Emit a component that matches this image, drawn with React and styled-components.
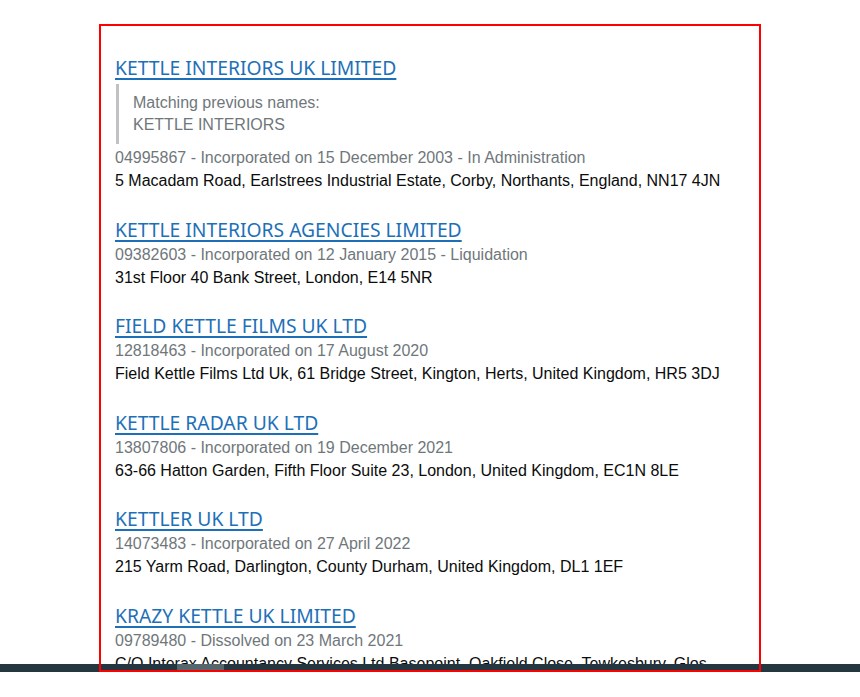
import React from "react";
import styled, { createGlobalStyle } from "styled-components";

const Global = createGlobalStyle`
  html, body { margin: 0; padding: 0; background: #fff; }
  body { font-family: "Liberation Sans", Arial, sans-serif; }
`;

const Page = styled.div`
  position: relative;
  width: 860px;
  height: 697px;
  background: #fff;
`;

const Viewport = styled.div`
  height: 664px;
  overflow: hidden;
`;

const Card = styled.div`
  margin: 24px 0 0 99px;
  width: 662px;
  box-sizing: border-box;
  padding: 31px 16px 0 16px;
`;

const Highlight = styled.div`
  position: absolute;
  top: 24px;
  left: 99px;
  width: 662px;
  height: 648px;
  box-sizing: border-box;
  border: 2px solid #ff0000;
  pointer-events: none;
`;

const ScrollTrack = styled.div`
  height: 8px;
  background: #243640;
  position: relative;
`;

const Thumb = styled.div`
  position: absolute;
  top: 0;
  left: 177px;
  width: 47px;
  height: 8px;
  background: #56666d;
`;

const Entry = styled.div`
  margin-bottom: 24.5px;
`;

const Title = styled.a`
  display: inline-block;
  font-family: "Noto Sans", sans-serif;
  font-size: 19.3px;
  line-height: 26px;
  color: #1d70b8;
  text-decoration: underline;
  text-decoration-thickness: 2px;
  text-underline-offset: 3px;
  cursor: pointer;
`;

const Quote = styled.div`
  margin: 3px 0 2px 1px;
  border-left: 3px solid #bfc1c3;
  padding: 8px 0 8px 14px;
  color: #6f777b;
  font-size: 16px;
  line-height: 22px;
`;

const Meta = styled.div`
  color: #6f777b;
  font-size: 16px;
  line-height: 23px;
`;

const Address = styled.div`
  color: #0b0c0c;
  font-size: 16px;
  line-height: 23px;
`;

const entries = [
  {
    name: "KETTLE INTERIORS UK LIMITED",
    previous: "KETTLE INTERIORS",
    meta: "04995867 - Incorporated on 15 December 2003 - In Administration",
    address: "5 Macadam Road, Earlstrees Industrial Estate, Corby, Northants, England, NN17 4JN",
  },
  {
    name: "KETTLE INTERIORS AGENCIES LIMITED",
    meta: "09382603 - Incorporated on 12 January 2015 - Liquidation",
    address: "31st Floor 40 Bank Street, London, E14 5NR",
  },
  {
    name: "FIELD KETTLE FILMS UK LTD",
    meta: "12818463 - Incorporated on 17 August 2020",
    address: "Field Kettle Films Ltd Uk, 61 Bridge Street, Kington, Herts, United Kingdom, HR5 3DJ",
  },
  {
    name: "KETTLE RADAR UK LTD",
    meta: "13807806 - Incorporated on 19 December 2021",
    address: "63-66 Hatton Garden, Fifth Floor Suite 23, London, United Kingdom, EC1N 8LE",
  },
  {
    name: "KETTLER UK LTD",
    meta: "14073483 - Incorporated on 27 April 2022",
    address: "215 Yarm Road, Darlington, County Durham, United Kingdom, DL1 1EF",
  },
  {
    name: "KRAZY KETTLE UK LIMITED",
    meta: "09789480 - Dissolved on 23 March 2021",
    address: "C/O Interax Accountancy Services Ltd Basepoint, Oakfield Close, Tewkesbury, Glos",
  },
];

export default function App() {
  return (
    <Page>
      <Global />
      <Viewport>
        <Card>
          {entries.map((e) => (
            <Entry key={e.name}>
              <Title>{e.name}</Title>
              {e.previous && (
                <Quote>
                  Matching previous names:
                  <br />
                  {e.previous}
                </Quote>
              )}
              <Meta>{e.meta}</Meta>
              <Address>{e.address}</Address>
            </Entry>
          ))}
        </Card>
      </Viewport>
      <ScrollTrack>
        <Thumb />
      </ScrollTrack>
      <Highlight />
    </Page>
  );
}
